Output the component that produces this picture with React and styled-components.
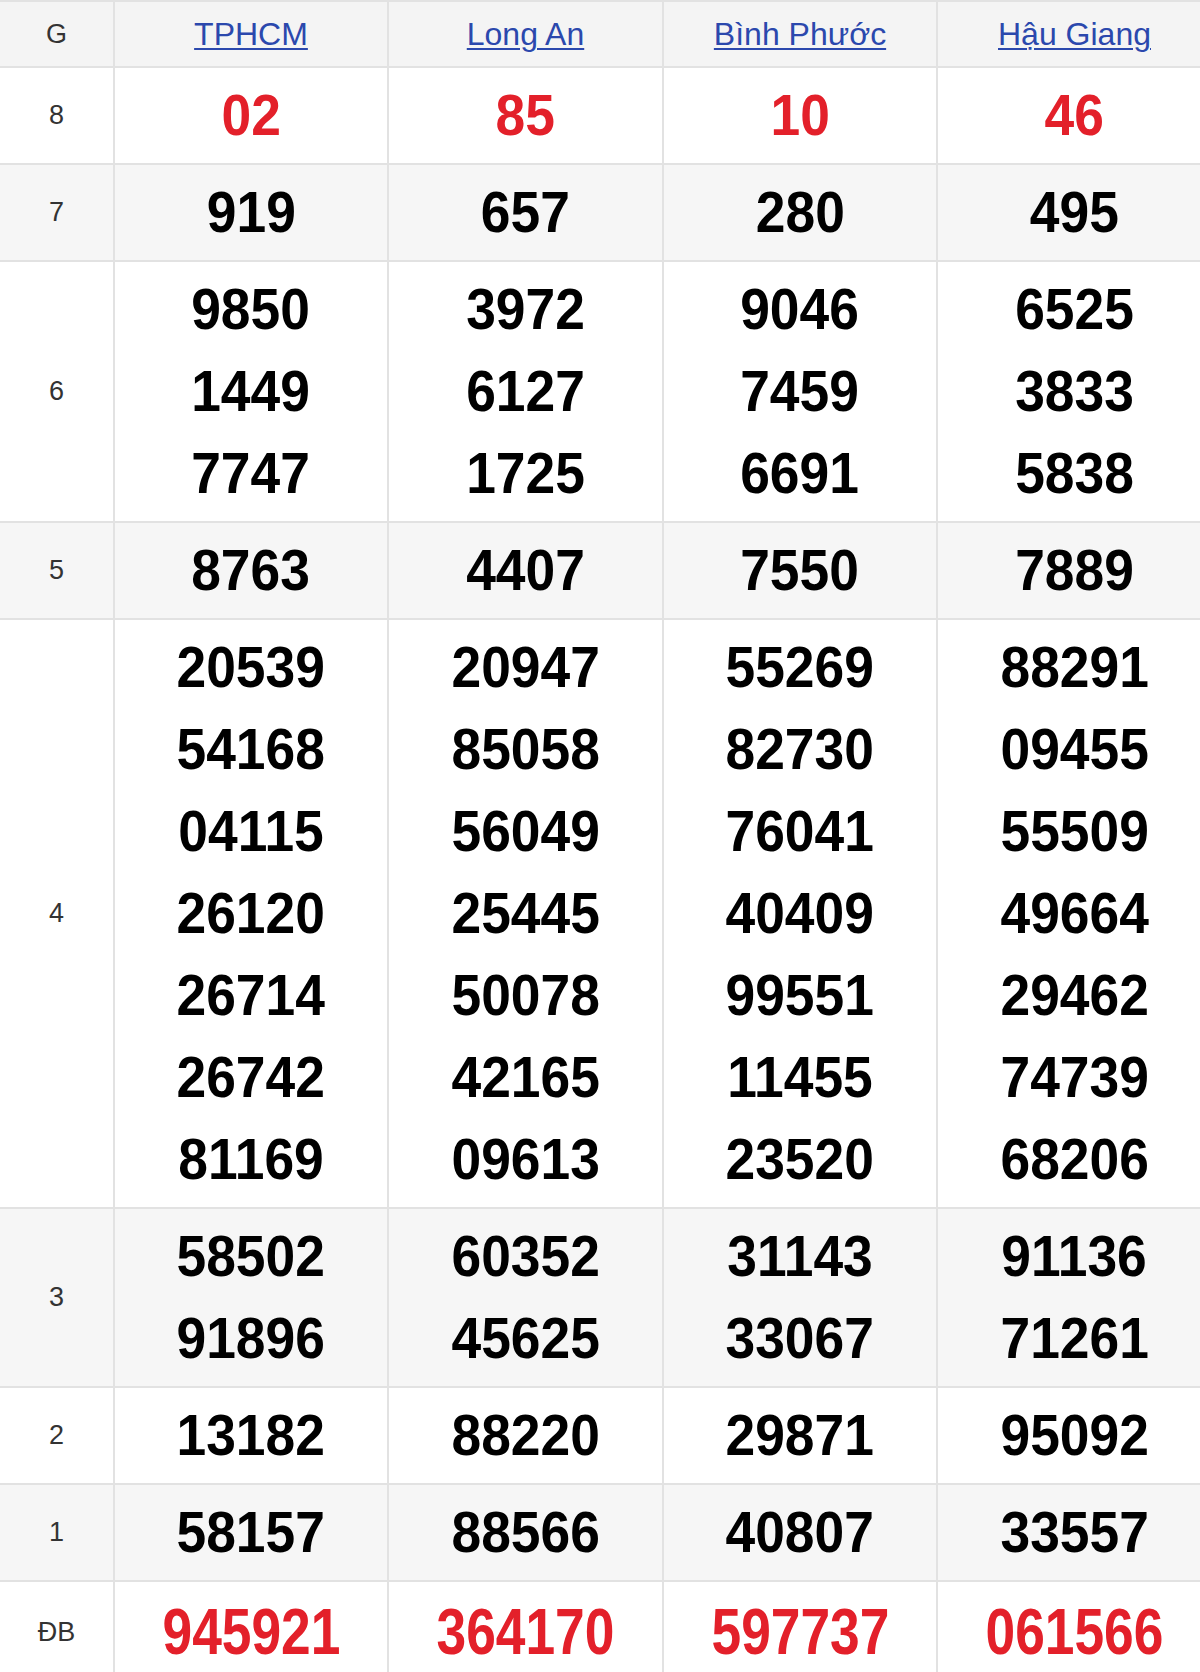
import React from "react";
import styled, { createGlobalStyle } from "styled-components";

const GlobalStyle = createGlobalStyle`
    html, body {
        margin: 0;
        padding: 0;
        background: #fff;
        overflow-x: hidden;
    }
    body {
        font-family: "Liberation Sans", Arial, sans-serif;
    }
`;

const provinces = ["TPHCM", "Long An", "Bình Phước", "Hậu Giang"];
const colWidths = [115, 274, 275, 274, 275];

// each prize row: label + one list of numbers per province
const prizes = [
    { label: "8", red: true, values: [["02"], ["85"], ["10"], ["46"]] },
    { label: "7", values: [["919"], ["657"], ["280"], ["495"]] },
    {
        label: "6",
        values: [
            ["9850", "1449", "7747"],
            ["3972", "6127", "1725"],
            ["9046", "7459", "6691"],
            ["6525", "3833", "5838"],
        ],
    },
    { label: "5", values: [["8763"], ["4407"], ["7550"], ["7889"]] },
    {
        label: "4",
        values: [
            ["20539", "54168", "04115", "26120", "26714", "26742", "81169"],
            ["20947", "85058", "56049", "25445", "50078", "42165", "09613"],
            ["55269", "82730", "76041", "40409", "99551", "11455", "23520"],
            ["88291", "09455", "55509", "49664", "29462", "74739", "68206"],
        ],
    },
    {
        label: "3",
        values: [
            ["58502", "91896"],
            ["60352", "45625"],
            ["31143", "33067"],
            ["91136", "71261"],
        ],
    },
    { label: "2", values: [["13182"], ["88220"], ["29871"], ["95092"]] },
    { label: "1", values: [["58157"], ["88566"], ["40807"], ["33557"]] },
    { label: "ĐB", red: true, special: true, values: [["945921"], ["364170"], ["597737"], ["061566"]] },
];

const App = () => {
    return (
        <>
            <GlobalStyle />
            <StyledTable>
                <colgroup>
                    {colWidths.map((w, i) => (
                        <StyledCol key={i} $width={w} />
                    ))}
                </colgroup>
                <thead>
                    <tr>
                        <StyledHeadCell>
                            <StyledG>G</StyledG>
                        </StyledHeadCell>
                        {provinces.map((p) => (
                            <StyledHeadCell key={p}>
                                <StyledLink href="#">{p}</StyledLink>
                            </StyledHeadCell>
                        ))}
                    </tr>
                </thead>
                <tbody>
                    {prizes.map((row, i) => (
                        <StyledRow key={row.label} $striped={i % 2 === 1}>
                            <StyledLabel>{row.label}</StyledLabel>
                            {row.values.map((list, j) => (
                                <StyledCell key={j}>
                                    {list.map((n) => (
                                        <StyledNumber
                                            key={n}
                                            $red={row.red}
                                            $special={row.special}
                                        >
                                            <span>{n}</span>
                                        </StyledNumber>
                                    ))}
                                </StyledCell>
                            ))}
                        </StyledRow>
                    ))}
                </tbody>
            </StyledTable>
        </>
    );
};

const StyledTable = styled.table`
    width: 1213px;
    table-layout: fixed;
    border-collapse: separate;
    border-spacing: 0;
    border-top: 2px solid #e2e2e2;
`;

const StyledCol = styled.col`
    width: ${(p) => p.$width}px;
`;

const StyledHeadCell = styled.th`
    height: 64px;
    padding: 0;
    background: #f4f4f4;
    border-bottom: 2px solid #e2e2e2;
    border-right: 2px solid #e2e2e2;
    text-align: center;
    vertical-align: middle;
    font-weight: normal;
`;

const StyledG = styled.span`
    font-size: 27px;
    color: #333;
`;

const StyledLink = styled.a`
    font-size: 32px;
    color: #2b48ad;
    text-decoration: underline;
    text-decoration-thickness: 2px;
    text-underline-offset: 3px;
`;

const StyledRow = styled.tr`
    background: ${(p) => (p.$striped ? "#f6f6f6" : "#fff")};
`;

const StyledLabel = styled.td`
    padding: 0;
    border-bottom: 2px solid #e2e2e2;
    border-right: 2px solid #e2e2e2;
    text-align: center;
    vertical-align: middle;
    font-size: 27px;
    color: #333;
`;

const StyledCell = styled.td`
    padding: 6px 0 7px;
    border-bottom: 2px solid #e2e2e2;
    border-right: 2px solid #e2e2e2;
    text-align: center;
    vertical-align: middle;
`;

const StyledNumber = styled.div`
    height: ${(p) => (p.$special ? "88px" : "82px")};
    line-height: ${(p) => (p.$special ? "88px" : "82px")};
    font-size: ${(p) => (p.$special ? "65px" : "58px")};
    font-weight: bold;
    color: ${(p) => (p.$red ? "#e3202a" : "#000")};
    span {
        display: inline-block;
        transform: scaleX(${(p) => (p.$special ? 0.82 : 0.92)});
    }
`;

export default App;
